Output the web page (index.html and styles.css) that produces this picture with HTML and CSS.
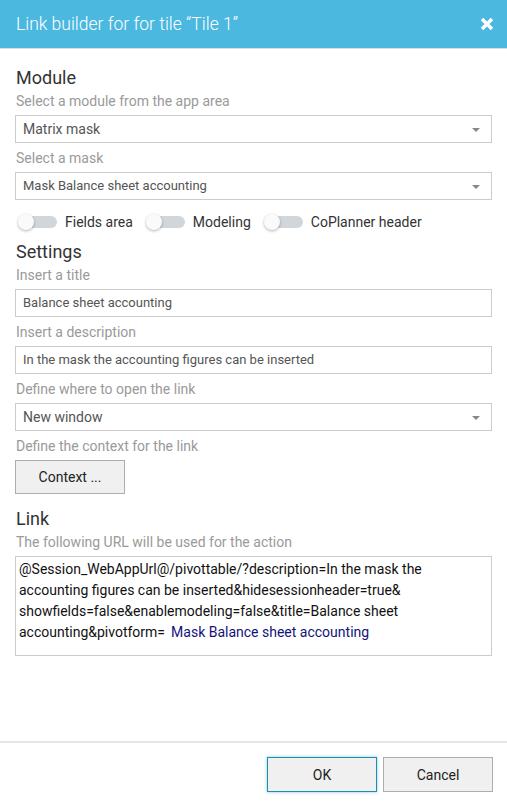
FILE: index.html
```html
<!DOCTYPE html>
<html lang="en">
<head>
  <meta charset="UTF-8">
  <meta name="viewport" content="width=device-width, initial-scale=1.0">
  <title>Link builder</title>
  <link rel="stylesheet" href="styles.css">
</head>
<body>
  <div class="dialog">
    <div class="dialog-header">
      <span class="dialog-title">Link builder for for tile “Tile 1”</span>
      <svg class="close" width="14" height="14" viewBox="0 0 14 14">
        <path d="M2 2 L12 12 M12 2 L2 12" stroke="#fff" stroke-width="3.4" stroke-linecap="butt"/>
      </svg>
    </div>

    <div class="dialog-body">
      <h2>Module</h2>
      <label>Select a module from the app area</label>
      <div class="select">Matrix mask</div>
      <label>Select a mask</label>
      <div class="select small">Mask Balance sheet accounting</div>

      <div class="toggles">
        <span class="toggle"><span class="track"><span class="knob"></span></span>Fields area</span>
        <span class="toggle"><span class="track"><span class="knob"></span></span>Modeling</span>
        <span class="toggle"><span class="track"><span class="knob"></span></span>CoPlanner header</span>
      </div>

      <h2>Settings</h2>
      <label>Insert a title</label>
      <div class="input small">Balance sheet accounting</div>
      <label>Insert a description</label>
      <div class="input small">In the mask the accounting figures can be inserted</div>
      <label>Define where to open the link</label>
      <div class="select">New window</div>
      <label>Define the context for the link</label>
      <button class="btn context">Context ...</button>

      <h2 class="link-title">Link</h2>
      <label>The following URL will be used for the action</label>
      <div class="url">@Session_WebAppUrl@/pivottable/?description=In the mask the accounting figures can be inserted&amp;hidesessionheader=true&amp; showfields=false&amp;enablemodeling=false&amp;title=Balance sheet accounting&amp;pivotform=<span class="token">Mask Balance sheet accounting</span></div>
    </div>

    <div class="dialog-footer">
      <button class="btn primary">OK</button>
      <button class="btn">Cancel</button>
    </div>
  </div>
</body>
</html>
```

FILE: styles.css
```css
* {
  box-sizing: border-box;
}
body {
  margin: 0;
  font-family: Roboto, "Liberation Sans", sans-serif;
  color: #333;
  background: #fff;
}
.dialog {
  width: 507px;
  height: 806px;
  display: flex;
  flex-direction: column;
}
.dialog-header {
  height: 49px;
  background-color: #4bb8df;
  border-bottom: 1px solid #dcdcdc;
  display: flex;
  align-items: center;
  justify-content: space-between;
  padding: 0 13px 0 16px;
}
.dialog-title {
  color: #fff;
  font-weight: 300;
  font-size: 17.5px;
  margin-top: -1px;
}
.dialog-body {
  flex: 1;
  padding: 18px 15px 0 15px;
}
h2 {
  margin: 0 0 4px 1px;
  font-size: 18px;
  font-weight: 400;
  color: #333;
  line-height: 22px;
}
.link-title {
  margin-top: 1px;
}
label {
  display: block;
  font-size: 14px;
  color: #9a9a9a;
  line-height: 16px;
  margin: 0 0 6px 1px;
}
.select,
.input {
  height: 28px;
  border: 1px solid #ccc;
  font-size: 14px;
  color: #555;
  padding: 0 7px;
  line-height: 26px;
  margin-bottom: 7px;
  position: relative;
}
.select::after {
  content: "";
  position: absolute;
  right: 11px;
  top: 12px;
  border-left: 4px solid transparent;
  border-right: 4px solid transparent;
  border-top: 4px solid #888;
}
.small {
  font-size: 13px;
}
.toggles {
  display: flex;
  gap: 12px;
  align-items: center;
  height: 22px;
  margin: 11px 0 8px 2px;
}
.toggle {
  display: flex;
  align-items: center;
  font-size: 14px;
  color: #333;
}
.track {
  position: relative;
  width: 36px;
  height: 12px;
  border-radius: 6px;
  background-color: #d1d6db;
  margin: 0 8px 0 4px;
}
.knob {
  position: absolute;
  left: -3px;
  top: -2px;
  width: 16px;
  height: 16px;
  border-radius: 50%;
  background: #fafafa;
  box-shadow: 0 1px 3px rgba(0, 0, 0, 0.3);
}
.btn {
  width: 110px;
  height: 35px;
  background-color: #f0f0f0;
  border: 1px solid #adadad;
  font-family: Roboto, "Liberation Sans", sans-serif;
  font-size: 14px;
  color: #222;
  padding: 0;
}
.context {
  display: block;
  height: 34px;
  margin: 5px 0 14px 0;
}
.url {
  height: 100px;
  border: 1px solid #ccc;
  font-size: 14px;
  line-height: 21px;
  color: #111;
  padding: 2px 7px 0 3px;
}
.token {
  color: #12137a;
  margin-left: 6px;
}
.dialog-footer {
  border-top: 2px solid #e5e5e5;
  height: 65px;
  display: flex;
  justify-content: flex-end;
  gap: 6px;
  padding: 14px 14px 0 0;
}
.primary {
  border-color: #1a8fb5;
  box-shadow: 0 0 3px rgba(26, 143, 181, 0.5);
}
```
